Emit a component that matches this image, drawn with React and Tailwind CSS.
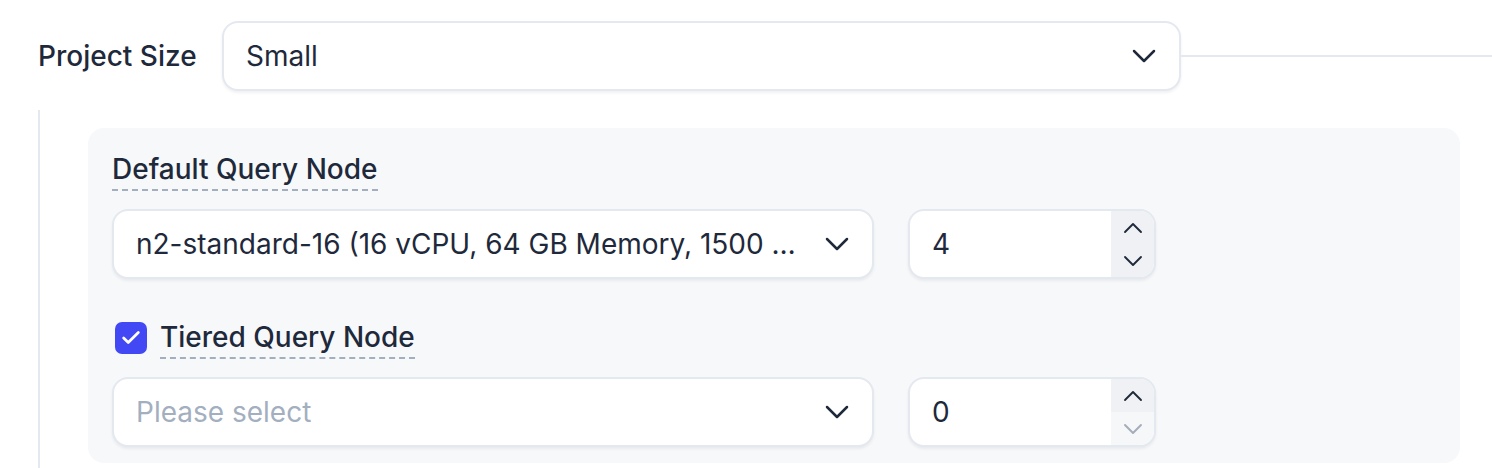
import { ChevronDown, ChevronUp, Check } from "lucide-react";

function SelectBox({ value, placeholder, className = "" }) {
  return (
    <div
      className={`flex items-center h-[70px] bg-white border-2 border-[#e4e8ef] rounded-[16px] shadow-[0_2px_3px_rgba(15,23,42,0.06)] pl-[22px] pr-[15px] ${className}`}
    >
      <span
        className={`flex-1 min-w-0 truncate text-[28px] leading-[36px] ${value ? "text-[#1e293b]" : "text-[#a3afbf]"}`}
      >
        {value || placeholder}
      </span>
      <ChevronDown className="ml-[8px] w-[40px] h-[40px] text-[#1e293b] shrink-0" strokeWidth={1.5} />
    </div>
  );
}

function NumberBox({ value, canDecrease = true }) {
  return (
    <div className="flex h-[70px] w-[248px] bg-white border-2 border-[#e4e8ef] rounded-[16px] shadow-[0_2px_3px_rgba(15,23,42,0.06)] overflow-hidden">
      <div className="flex-1 flex items-center pl-[22px] text-[28px] text-[#1e293b]">{value}</div>
      <div className="w-[43px] flex flex-col">
        <div className="flex-1 flex items-center justify-center bg-[#eff1f4]">
          <ChevronUp className="w-[32px] h-[32px] text-[#1e293b]" strokeWidth={1.4} />
        </div>
        <div
          className={`flex-1 flex items-center justify-center ${canDecrease ? "bg-[#eff1f4]" : "bg-[#f6f7f9]"}`}
        >
          <ChevronDown
            className={`w-[32px] h-[32px] ${canDecrease ? "text-[#1e293b]" : "text-[#a3acb9]"}`}
            strokeWidth={1.4}
          />
        </div>
      </div>
    </div>
  );
}

function FieldLabel({ children }) {
  return (
    <span className="inline-block leading-[40px] text-[28px] font-medium text-[#1e293b] border-b-2 border-dashed border-[#a3afbf]">
      {children}
    </span>
  );
}

export default function App() {
  return (
    <div className="w-[1492px] h-[468px] bg-white overflow-hidden font-['Inter',sans-serif]">
      <div className="flex items-center pt-[21px]">
        <span className="pl-[38px] w-[222px] text-[28px] font-medium text-[#1e293b]">Project Size</span>
        <SelectBox value="Small" className="w-[959px]" />
        <div className="flex-1 h-[2px] bg-[#e5e8ee]" />
      </div>

      <div className="ml-[38px] mt-[19px] border-l-2 border-[#e4e8ef] pt-[18px] pl-[48px] pr-[32px] h-[400px]">
        <div className="bg-[#f7f8fa] rounded-[16px] pt-[21px] pb-[16px] px-[24px]">
          <FieldLabel>Default Query Node</FieldLabel>
          <div className="flex gap-[34px] mt-[18px]">
            <SelectBox value="n2-standard-16 (16 vCPU, 64 GB Memory, 1500 GB SSD)" className="w-[762px]" />
            <NumberBox value="4" />
          </div>

          <div className="flex items-center gap-[13px] mt-[38px]">
            <div className="ml-[3px] w-[32px] h-[32px] rounded-[7px] bg-[#4148f4] flex items-center justify-center">
              <Check className="w-[22px] h-[22px] text-white" strokeWidth={3} />
            </div>
            <FieldLabel>Tiered Query Node</FieldLabel>
          </div>
          <div className="flex gap-[34px] mt-[18px]">
            <SelectBox placeholder="Please select" className="w-[762px]" />
            <NumberBox value="0" canDecrease={false} />
          </div>
        </div>
      </div>
    </div>
  );
}
